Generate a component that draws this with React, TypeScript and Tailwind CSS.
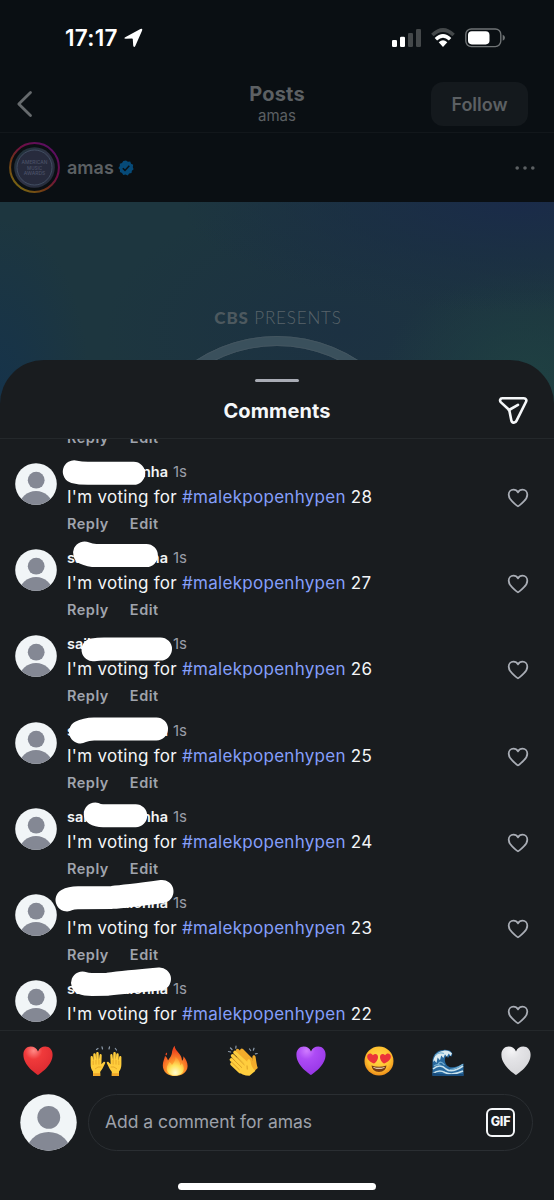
import React from "react";

type Comment = {
  count: number;
  head: string;
  tail: string;
  scribble: string;
  last?: boolean;
};

const comments: Comment[] = [
  { count: 28, head: "", tail: "nha", scribble: "M74.3 11.8 Q80 13.3 88 13.3 L133.7 13.3" },
  { count: 27, head: "sa", tail: "ha", scribble: "M84.5 7 Q90 9.6 97 9.5 L146.4 9.5" },
  { count: 26, head: "saik", tail: "", scribble: "M93 17.8 Q98 17 104 17 L160.5 17" },
  { count: 25, head: "s", tail: "a", scribble: "M80.5 12.9 Q86 10 94 9.9 L156.5 9.9" },
  { count: 24, head: "sai", tail: "nha", scribble: "M95.3 9 Q98 10.7 103 10.7 L135.7 10.7" },
  { count: 23, head: "", tail: "nalenha", scribble: "M67 9 Q71 6.8 78 6.8 L112 6.4 Q125 5.5 162 0.5" },
  { count: 22, head: "sa", tail: "alenha", scribble: "M82.5 6 Q86 7.4 92 7.4 L108 7.2 Q125 5 159.5 2", last: true },
];

const Avatar = ({ className }: { className: string }) => (
  <svg viewBox="0 0 42 42" className={className}>
    <clipPath id="avatar-clip">
      <circle cx="21" cy="21" r="20.8" />
    </clipPath>
    <g clipPath="url(#avatar-clip)">
      <rect width="42" height="42" fill="#f1f5f7" />
      <circle cx="21.2" cy="17.2" r="8.4" fill="#848894" />
      <ellipse cx="21" cy="43.5" rx="16.5" ry="15.5" fill="#848894" />
    </g>
  </svg>
);

const HeartOutline = () => (
  <svg width="22" height="20" viewBox="0 0 22 20" fill="none" stroke="#a9adb5" strokeWidth="1.8" strokeLinejoin="round">
    <path d="M11 18.3C10.3 18.3 7.6 15.8 5.2 13.4C2.9 11.2 1.7 9.3 1.7 6.8C1.7 3.9 3.8 1.7 6.4 1.7C8.5 1.7 10 2.6 11 4.4C12 2.6 13.5 1.7 15.6 1.7C18.2 1.7 20.3 3.9 20.3 6.8C20.3 9.3 19.1 11.2 16.8 13.4C14.4 15.8 11.7 18.3 11 18.3Z" />
  </svg>
);

const Actions = () => (
  <div className="flex h-5 items-center gap-[21px] text-[14.5px] font-semibold leading-5 tracking-[0.5px] text-[#a0a4ad]">
    <span>Reply</span>
    <span>Edit</span>
  </div>
);

const CommentRow = ({ count, head, tail, scribble, last }: Comment) => (
  <div className="relative flex h-[86.2px] shrink-0 pl-[15px] pr-[25px]">
    <Avatar className="mt-[3px] size-[42px] shrink-0" />
    <div className="ml-[10px] flex-1">
      <div className="mt-[2px] flex h-5 items-center text-[14.5px] leading-5">
        <div className="flex w-[101px] justify-between font-semibold text-[#f3f5f7]">
          <span>{head}</span>
          <span>{tail}</span>
        </div>
        <span className="ml-[5px] text-[15px] text-[#9a9ea7]">1s</span>
      </div>
      <p className="mt-[3px] h-6 whitespace-nowrap text-[17px] leading-6 tracking-[0.28px] text-[#f3f5f7]">
        I'm voting for <span className="text-[#859ffb]">#malekpopenhypen</span> {count}
      </p>
      {!last && (
        <div className="mt-[5px]">
          <Actions />
        </div>
      )}
    </div>
    <div className="mt-[28px]">
      <HeartOutline />
    </div>
    <svg width="200" height="30" className="absolute left-0 top-0 overflow-visible">
      <path d={scribble} fill="none" stroke="#fff" strokeWidth="23" strokeLinecap="round" strokeLinejoin="round" />
    </svg>
  </div>
);

/* Quick reactions */
const HeartEmoji = ({ id, light, main, dark }: { id: string; light: string; main: string; dark: string }) => (
  <svg width="32" height="32" viewBox="0 0 32 32">
    <defs>
      <radialGradient id={id} cx="0.35" cy="0.15" r="0.85">
        <stop offset="0" stopColor={light} />
        <stop offset="0.35" stopColor={main} />
        <stop offset="1" stopColor={dark} />
      </radialGradient>
    </defs>
    <path
      d="M16 30C14 28.5 1.4 20.5 1.4 9.7C1.4 4.8 4.6 1.6 8.7 1.6C12 1.6 14.7 3.4 16 6.6C17.3 3.4 20 1.6 23.3 1.6C27.4 1.6 30.6 4.8 30.6 9.7C30.6 20.5 18 28.5 16 30Z"
      fill={`url(#${id})`}
    />
  </svg>
);

const HandsEmoji = () => (
  <svg width="32" height="32" viewBox="0 0 32 32">
    <g stroke="#8d9bab" strokeWidth="1.2" strokeLinecap="round">
      <path d="M6.5 4.5L8 3.5M12 1.8L12.5 4M19.5 1.8L19 4M25.3 3.5L26.5 5" />
    </g>
    <g id="raised-hand">
      <path
        d="M3 31V26.5C1.3 24.5 .6 22 .6 19V12.2C.6 10.5 2.7 10.5 2.9 12.2L3.3 16V9.5C3.3 7.7 5.6 7.7 5.8 9.5L6.2 15V8.3C6.3 6.5 8.7 6.6 8.7 8.4L8.9 15L9.5 10C9.8 8.5 11.8 8.8 11.7 10.5L11.4 19.3L13.3 17.3C14.4 16.2 15.8 17.2 15 18.6L12.5 23.5C11.8 25 10.4 26 10.2 27.2V31Z"
        fill="#ffcd3c"
      />
      <path d="M3 28.2H10.2V31H3Z" fill="#f0a829" />
      <path d="M3.2 16V20M6 15V19.5M8.9 15V19.5M5 24Q8 21 11.4 22" fill="none" stroke="#d99520" strokeWidth=".6" />
    </g>
    <use href="#raised-hand" transform="matrix(-1 0 0 1 32 0)" />
  </svg>
);

const FireEmoji = () => (
  <svg width="32" height="32" viewBox="0 0 32 32">
    <defs>
      <radialGradient id="flame" cx="0.5" cy="0.85" r="0.8">
        <stop offset="0" stopColor="#ffd84a" />
        <stop offset="0.4" stopColor="#ff9b2c" />
        <stop offset="0.85" stopColor="#f0471f" />
      </radialGradient>
      <radialGradient id="flame-core" cx="0.5" cy="0.85" r="0.8">
        <stop offset="0" stopColor="#fffbd0" />
        <stop offset="0.5" stopColor="#ffe25a" />
        <stop offset="1" stopColor="#ff8f2c" />
      </radialGradient>
    </defs>
    <path
      d="M16 31C9 31 3.8 26.8 3.8 20.4C3.8 16.7 5.4 14 6 11C7.6 12 8.6 13.5 9 15.6C10.8 12.7 12.4 11 12.8 8.5C13.1 5.5 14.1 2.5 15.6 .7C15.7 4 18.2 6 20.3 8.8C21.8 10.8 23 12.7 23 15.8C24.3 14.7 24.4 13 24.4 11.2C27 14 28.6 17.5 28.6 21C28.6 27 23 31 16 31Z"
      fill="url(#flame)"
    />
    <path
      d="M16.3 30.5C11.5 30.5 7.8 28 7.8 23.5C7.8 20.5 9.6 19 10.1 16.9C11.5 17.6 12.5 18.6 12.9 20C15 17.5 16.6 14.8 16.5 11.9C19.5 14.2 21.4 17.3 21.2 20.3C22.2 19.8 22.5 18.9 22.7 18C24.2 19.8 24.8 21.7 24.8 23.5C24.8 28 21 30.5 16.3 30.5Z"
      fill="url(#flame-core)"
    />
    <path d="M7 10.5C6 9.5 6.7 8.5 7.7 7.5C8.5 8.8 8 9.8 7 10.5Z" fill="#ef4a20" />
  </svg>
);

const ClapEmoji = () => (
  <svg width="32" height="32" viewBox="0 0 32 32">
    <path
      d="M1.5 6.5L3.6 7M3.5 3L5 4.5M9 1.2L8.8 3.1M22.5 4L23.7 5.5M27 3.2L26.3 5.2M30.3 8.5L28.4 8.9"
      stroke="#8d9bab"
      strokeWidth="1.2"
      strokeLinecap="round"
    />
    {/* back hand */}
    <g stroke="#f3ac2b" strokeWidth="3.4" strokeLinecap="round">
      <path d="M10.5 5.5L21 16M14.8 5.2L24 14.5" />
    </g>
    <path d="M16 7L25.2 15.5L25.4 12C25.5 9.8 28.2 9.8 28.6 12C29.3 16.5 29.6 20 30.8 23L25.5 27.5L17 19Z" fill="#f3ac2b" />
    {/* front hand */}
    <g stroke="#ffce3e" strokeWidth="3.6" strokeLinecap="round">
      <path d="M8 7.5L20 19M5.6 10.8L17 22M4.4 14.8L14 24M5 19L13 26.5" />
    </g>
    <path
      d="M10 12L20 20.5L20.2 16C20.4 13.8 23.2 13.8 23.5 16C24 20 25 23 28.5 25.8L22.5 30.8C17.5 30.8 13.5 29 10 25.5L7 18Z"
      fill="#ffce3e"
    />
    <path d="M6.4 9L17.5 20M4.6 12.7L15 22.8M4.3 16.8L12.6 25" fill="none" stroke="#cf8d1c" strokeWidth=".7" />
    <path d="M20 20.5L20.3 24.5" stroke="#cf8d1c" strokeWidth=".7" />
  </svg>
);

const HeartEyesEmoji = () => (
  <svg width="32" height="32" viewBox="0 0 32 32">
    <defs>
      <radialGradient id="face" cx="0.5" cy="0.4" r="0.6">
        <stop offset="0" stopColor="#ffdc4a" />
        <stop offset="0.65" stopColor="#ffc12f" />
        <stop offset="1" stopColor="#ed8c1a" />
      </radialGradient>
    </defs>
    <circle cx="16" cy="16" r="14.5" fill="url(#face)" />
    <path d="M8.5 20.6Q16 23 23.5 20.6Q22.8 27 16 27Q9.2 27 8.5 20.6Z" fill="#743b13" />
    <path d="M10 22Q16 23.7 22 22Q21.4 23.8 16 23.8Q10.5 23.8 10 22Z" fill="#fff5da" />
    <path
      id="eye"
      d="M10.9 18.6C7.5 17.3 3.6 14.5 4.2 11.1C4.8 8 8.3 7.8 9.9 10.3C11.8 8 15 8.9 15 11.9C15 15 12.5 17.6 10.9 18.6Z"
      fill="#eb3439"
    />
    <use href="#eye" transform="matrix(-1 0 0 1 32 0)" />
  </svg>
);

const WaveEmoji = () => (
  <svg width="32" height="32" viewBox="0 0 32 32">
    <path
      d="M.5 30.8V15.5C1 10 5.4 5 11.5 5C13.8 4.5 18 5.2 19.5 7.2C20.7 8 20.3 10 19.5 11.5L17.5 10.8L16 13L14.5 10.8C12.2 13 12.3 17.3 15 20.5C19 24 25.5 22 31.5 18.5V30.8Z"
      fill="#28699e"
    />
    <path
      d="M1 17C2 10.5 6 6.5 11 6C14 5 18 6 20 8.5L18.5 11L16.8 8.6L14.8 11.8L13 9.2L11.4 13L9.2 10.6L8 15.2L5.6 12.5L4.5 18L2.5 15.5Z"
      fill="#dcebf0"
    />
    <path
      d="M1 24Q8 18 14 24Q20 28.5 31 21M1 28.5Q7 24 13 27.5Q20 31 31 26"
      fill="none"
      stroke="#c9e2ec"
      strokeWidth="1.6"
    />
    <path d="M3 10.5Q7 6.5 12 8.5M6 19Q9 15 12.5 20M2 21Q5 18.5 9 20.5M18 24.5Q24 24 31 19.2" fill="none" stroke="#79b2d3" strokeWidth="1.2" />
    <path d="M.5 27.5Q8 29.5 16 29.2T31.5 29V30.8H.5Z" fill="#174b7c" />
  </svg>
);

/* Status bar */
const StatusBar = () => (
  <div className="flex h-[76px] items-center justify-between pl-[65px] pr-[49px]">
    <div className="flex items-center gap-[5px] text-white">
      <span className="w-[54px] whitespace-nowrap text-[22.5px] font-semibold leading-7 tracking-[0.3px]">17:17</span>
      <svg width="19" height="20" viewBox="0 0 19 20" fill="#fff">
        <path d="M1.2 9.3L16.4 1.1Q19 .1 18 2.8L11.3 18Q10 20.3 9.2 17.5L8.8 11.3Q8.7 10.5 8 10.5L1.8 10.7Q-.8 10.5 1.2 9.3Z" />
      </svg>
    </div>
    <div className="flex items-center">
      <svg width="29" height="20" viewBox="0 0 29 20">
        <rect x="0" y="12" width="5" height="7" rx="1.3" fill="#fff" />
        <rect x="8" y="8.8" width="5" height="10.2" rx="1.3" fill="#fff" />
        <rect x="16" y="5" width="5" height="14" rx="1.3" fill="#44484a" />
        <rect x="24" y="1" width="5" height="18" rx="1.3" fill="#44484a" />
      </svg>
      <svg width="26" height="20" viewBox="0 0 26 20" className="ml-[9px]" fill="none">
        <path d="M2.4 7Q13-3 23.6 7" stroke="#44484a" strokeWidth="3.6" />
        <path d="M5.9 11.2Q13 4.4 20.1 11.2" stroke="#fff" strokeWidth="3.5" />
        <path d="M8.7 14.3Q13 10.4 17.3 14.3L13 18.9Z" fill="#fff" />
      </svg>
      <svg width="40" height="20" viewBox="0 0 40 20" className="ml-[9px]">
        <rect x=".8" y="1" width="35" height="17.6" rx="5.5" fill="none" stroke="#6f7375" strokeWidth="1.4" />
        <rect x="3" y="3.2" width="21.5" height="13.2" rx="3.8" fill="#fff" />
        <path d="M37.7 6.8Q40 7.6 40 9.8T37.7 12.8Z" fill="#6f7375" />
      </svg>
    </div>
  </div>
);

const PostHeader = () => (
  <>
    <div className="grid h-[57px] grid-cols-3 items-center border-b border-[#12171b] pl-4 pr-[26px]">
      <svg width="18" height="28" viewBox="0 0 18 28" fill="none" stroke="#666a6d" strokeWidth="2.8" strokeLinecap="round" strokeLinejoin="round">
        <path d="M14.5 2.5L2.8 14L14.5 25.5" />
      </svg>
      <div className="flex flex-col items-center pl-[10px] text-[#5c6063]">
        <span className="text-[20px] font-bold leading-6 tracking-[0.2px]">Posts</span>
        <span className="text-[15px] leading-5">amas</span>
      </div>
      <div className="flex h-[44px] w-[97px] items-center justify-center justify-self-end rounded-xl bg-[#14191d] text-[18px] font-semibold text-[#5c6063]">
        Follow
      </div>
    </div>
    <div className="flex h-[69px] items-center pl-[9px] pr-[19px]">
      <svg width="51" height="51" viewBox="0 0 51 51" className="shrink-0">
        <defs>
          <linearGradient id="story" x1="0.1" y1="0.9" x2="0.8" y2="0.1">
            <stop offset="0" stopColor="#7a6a13" />
            <stop offset="0.35" stopColor="#703515" />
            <stop offset="0.65" stopColor="#700f42" />
            <stop offset="1" stopColor="#5c0e60" />
          </linearGradient>
          <linearGradient id="badge" x1="0" y1="0" x2="1" y2="1">
            <stop offset="0" stopColor="#1c3036" />
            <stop offset="0.5" stopColor="#303346" />
            <stop offset="1" stopColor="#222a38" />
          </linearGradient>
        </defs>
        <circle cx="25.5" cy="25.5" r="24.4" fill="none" stroke="url(#story)" strokeWidth="2" />
        <circle cx="25.5" cy="25.5" r="20.3" fill="url(#badge)" />
        <circle cx="25.5" cy="25.5" r="17.5" fill="#272b3d" stroke="#414d61" strokeWidth="1" />
        <g fill="#4b5167" fontFamily="Inter, sans-serif" fontSize="5.4" fontWeight="500" textAnchor="middle">
          <text x="25.5" y="22.3" textLength="26" lengthAdjust="spacingAndGlyphs">AMERICAN</text>
          <text x="25.5" y="27.8" textLength="15" lengthAdjust="spacingAndGlyphs">MUSIC</text>
          <text x="25.5" y="33.3" textLength="21.5" lengthAdjust="spacingAndGlyphs">AWARDS</text>
        </g>
      </svg>
      <span className="ml-[7px] text-[18px] font-semibold text-[#5c6063]">amas</span>
      <svg width="16" height="16" viewBox="0 0 16 16" className="ml-[4px]">
        <path
          d="M8 .4L9.9 1.7L12.2 1.5L13.1 3.7L15.2 4.7L14.8 7L15.6 9.2L13.9 10.8L13.5 13.1L11.2 13.5L9.7 15.4L7.6 14.5L5.3 15L4 13L1.9 12.1L2 9.8L.4 8L1.8 6.1L1.8 3.8L4 3L5.3 1Z"
          fill="#064a78"
        />
        <path d="M4.8 8.2L7 10.4L11.3 5.8" fill="none" stroke="#0a1115" strokeWidth="1.5" />
      </svg>
      <svg width="20" height="4" viewBox="0 0 20 4" className="ml-auto" fill="#5c6063">
        <circle cx="2.2" cy="2" r="1.8" />
        <circle cx="10" cy="2" r="1.8" />
        <circle cx="17.8" cy="2" r="1.8" />
      </svg>
    </div>
  </>
);

const PostImage = () => (
  <div className="flex h-[258px] shrink-0 flex-col items-center overflow-hidden bg-[#1d363f] bg-[radial-gradient(ellipse_340px_110px_at_94%_0%,#1a2b49_0%,#1a2d45aa_50%,transparent_100%),radial-gradient(ellipse_90px_170px_at_0%_72%,#16334a_0%,transparent_100%),radial-gradient(ellipse_150px_110px_at_96%_68%,#1f4042_0%,transparent_100%),radial-gradient(ellipse_240px_140px_at_62%_50%,#1c3142_0%,transparent_100%)] pt-[105px]">
    <p className="pl-[2px] font-[Lato,sans-serif] text-[17px] font-light leading-[22px] tracking-[0.85px] text-[#59646a]">
      <span className="font-black text-[#4d595f]">CBS</span> PRESENTS
    </p>
    <svg width="310" height="120" viewBox="0 0 310 120" className="mt-[7px] shrink-0" fill="none">
      <circle cx="155" cy="149" r="144" stroke="#3a505c" strokeWidth="10" />
      <circle cx="155" cy="149" r="148.5" stroke="#435560" strokeWidth="1" />
      <circle cx="155" cy="149" r="139.5" stroke="#435560" strokeWidth="1" />
    </svg>
  </div>
);

const reactions = [
  <HeartEmoji id="heart-red" light="#ff8a86" main="#f03a3b" dark="#dc2a30" />,
  <HandsEmoji />,
  <FireEmoji />,
  <ClapEmoji />,
  <HeartEmoji id="heart-purple" light="#cf7bff" main="#ad4bf5" dark="#9736e6" />,
  <HeartEyesEmoji />,
  <WaveEmoji />,
  <HeartEmoji id="heart-white" light="#f4f4f6" main="#e4e4e7" dark="#d6d6d9" />,
];

const App = () => (
  <div className="flex h-[1200px] w-[554px] flex-col overflow-hidden bg-[#0a0f13] font-[Inter,sans-serif]">
    <StatusBar />
    <PostHeader />
    <PostImage />

    {/* Comments sheet */}
    <div className="relative -mt-[100px] flex h-[840px] shrink-0 flex-col rounded-t-[44px] bg-[#191c1f]">
      <div className="flex h-[79px] shrink-0 flex-col border-b border-[#24282b]">
        <div className="mx-auto mt-[19px] h-[3px] w-[44px] rounded-full bg-[#a9acb5]" />
        <div className="mt-[10px] grid h-[38px] grid-cols-[1fr_auto_1fr] items-center pr-[26px]">
          <h1 className="col-start-2 pl-[26px] text-[20px] font-bold leading-7 tracking-[0.1px] text-[#f5f7f9]">Comments</h1>
          <svg width="30" height="30" viewBox="0 0 30 30" fill="none" stroke="#f5f7f9" strokeWidth="2.6" strokeLinejoin="round" strokeLinecap="round" className="justify-self-end">
            <path d="M4.2 2.3H25.8C28.2 2.3 28.9 4.2 27.9 6L18.6 24.6C17.2 27.6 13.9 27.2 13.3 24.2L11.5 15.3Q11.2 14 10.2 13L3 6.4C1.4 4.8 1.9 2.3 4.2 2.3Z" />
            <path d="M11 14L20 8.9" />
          </svg>
        </div>
      </div>

      <div className="flex h-[591px] shrink-0 flex-col overflow-hidden">
        <div className="-mt-[11px] mb-[12px] pl-[67px]">
          <Actions />
        </div>
        {comments.map((comment) => (
          <CommentRow key={comment.count} {...comment} />
        ))}
      </div>

      <div className="flex h-[60px] shrink-0 items-center justify-between border-t border-[#24282b] px-[22px]">
        {reactions.map((reaction, i) => (
          <span key={i}>{reaction}</span>
        ))}
      </div>

      <div className="mt-[4px] flex items-center pl-[20px] pr-[21px]">
        <Avatar className="size-[57px]" />
        <div className="ml-[11px] flex h-[57px] flex-1 items-center justify-between rounded-full border border-[#2a2e32] pl-4 pr-[17px]">
          <span className="text-[17.5px] tracking-[-0.03px] text-[#9da1aa]">Add a comment for amas</span>
          <div className="flex size-[29px] items-center justify-center rounded-[6px] border-[2.5px] border-[#f5f7f9] text-[12.5px] font-extrabold tracking-[-0.2px] text-[#f5f7f9]">
            GIF
          </div>
        </div>
      </div>

      <div className="mx-auto mt-[32px] h-[7px] w-[198px] rounded-full bg-white" />
    </div>
  </div>
);

export default App;
